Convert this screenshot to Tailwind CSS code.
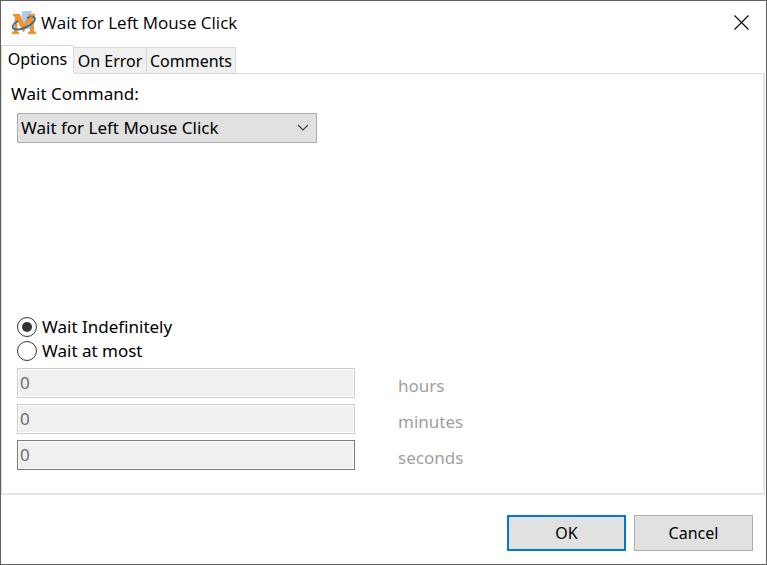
<!DOCTYPE html>
<html lang="en">
<head>
    <meta charset="UTF-8">
    <meta name="viewport" content="width=device-width, initial-scale=1.0">
    <title>Wait for Left Mouse Click</title>
    <script src="https://cdn.jsdelivr.net/npm/@tailwindcss/browser@4"></script>
</head>
<body class="bg-white text-black text-[17px] leading-6 font-['Noto_Sans',sans-serif]">
    <div class="min-h-screen flex flex-col border border-[#5f5f5f]">
        <!-- Title bar -->
        <header class="h-11 shrink-0 flex items-center justify-between pl-[11px] pr-4">
            <div class="flex items-center gap-[5px]">
                <svg class="w-6 h-6" viewBox="0 0 24 24" fill="none" aria-hidden="true">
                    <path d="M10 0h9l3 3v15H10z" fill="#a9cdf3"/>
                    <path d="M19 0v3h3z" fill="#dcebfb"/>
                    <path d="M1 3h7l4 10 5-10h6v2.500h-2L22 20.500h2V23h-8v-2.500h2L17.500 10 12 21h-1L5.500 10 5 20.500h2V23H0v-2.500h2L3 5.500H1z" fill="#f0922b"/>
                    <path d="M6 10C-1 14-1 18.500 5 18.500 12 18.500 23 12 23 8c0-2.500-4-2.500-8-1" stroke="#2b6c96" stroke-width="1.800"/>
                    <path d="M17.500 5.500h3l.5 4-2.700 1.500z" fill="#f0922b"/>
                </svg>
                <h1 class="text-[17px] font-['Open_Sans',sans-serif]">Wait for Left Mouse Click</h1>
            </div>
            <button type="button" aria-label="Close" class="w-4 h-4">
                <svg class="w-4 h-4" viewBox="0 0 16 16" fill="none" stroke="#000" stroke-width="1.1">
                    <path d="M.5 .5l14 14M14.500 .5l-14 14"/>
                </svg>
            </button>
        </header>

        <!-- Tabs -->
        <div role="tablist" class="flex items-end h-7 shrink-0 text-base">
            <button type="button" role="tab" aria-selected="true" class="h-7 w-[73px] pb-0.5 border border-b-0 border-[#d9d9d9] bg-white">Options</button>
            <button type="button" role="tab" aria-selected="false" class="h-[26px] w-[73px] border-t border-r border-[#d9d9d9] bg-[#f0f0f0]">On Error</button>
            <button type="button" role="tab" aria-selected="false" class="h-[26px] w-[89px] border-t border-r border-[#d9d9d9] bg-[#f0f0f0]">Comments</button>
        </div>

        <!-- Options panel -->
        <main role="tabpanel" class="grow flex flex-col mr-px border-r-2 border-b-2 border-[#e4e4e4]">
            <div class="flex">
                <div class="w-[73px]"></div>
                <div class="grow h-px bg-[#d9d9d9]"></div>
            </div>
            <div class="grow border-l border-[#d9d9d9] pl-[15px] pt-2">
                <label for="command" class="block -ml-[6px]">Wait Command:</label>
                <div class="relative w-[300px] mt-[7px]">
                    <select id="command" class="appearance-none block w-full h-[30px] pl-[3px] border border-[#adadad] bg-[#e1e1e1]">
                        <option>Wait for Left Mouse Click</option>
                    </select>
                    <svg class="absolute right-2 top-[11px] w-3 h-2 pointer-events-none" viewBox="0 0 12 8" fill="none" stroke="#404040" stroke-width="1.2">
                        <path d="M1 1l5 5 5-5"/>
                    </svg>
                </div>

                <div class="mt-[172px]">
                    <label class="flex items-center gap-[5px]">
                        <input type="radio" name="limit" checked class="appearance-none w-5 h-5 rounded-full border border-[#333] p-1 bg-clip-content bg-white checked:bg-[#333]">
                        Wait Indefinitely
                    </label>
                    <label class="flex items-center gap-[5px]">
                        <input type="radio" name="limit" class="appearance-none w-5 h-5 rounded-full border border-[#333] p-1 bg-clip-content bg-white checked:bg-[#333]">
                        Wait at most
                    </label>
                </div>

                <div class="mt-[5px] flex flex-col gap-[6px] text-[#a0a0a0]">
                    <div class="flex items-end gap-[43px]">
                        <input id="hours" type="text" value="0" disabled class="w-[338px] h-[30px] px-0.5 pb-0.5 border border-[#ccc] bg-[#f0f0f0] text-[#6d6d6d] inset-ring inset-ring-white">
                        <label for="hours">hours</label>
                    </div>
                    <div class="flex items-end gap-[43px]">
                        <input id="minutes" type="text" value="0" disabled class="w-[338px] h-[30px] px-0.5 pb-0.5 border border-[#ccc] bg-[#f0f0f0] text-[#6d6d6d] inset-ring inset-ring-white">
                        <label for="minutes">minutes</label>
                    </div>
                    <div class="flex items-end gap-[43px]">
                        <input id="seconds" type="text" value="0" disabled class="w-[338px] h-[30px] px-0.5 pb-0.5 border border-[#7a7a7a] bg-[#f0f0f0] text-[#6d6d6d] inset-ring inset-ring-white">
                        <label for="seconds">seconds</label>
                    </div>
                </div>
            </div>
        </main>

        <!-- Dialog buttons -->
        <footer class="shrink-0 flex justify-end gap-2 pt-5 pb-[13px] pr-[13px] text-base">
            <button type="button" class="w-[119px] h-9 border-2 border-[#0078d7] bg-[#e1e1e1]">OK</button>
            <button type="button" class="w-[119px] h-9 border border-[#adadad] bg-[#e1e1e1]">Cancel</button>
        </footer>
    </div>
</body>
</html>
